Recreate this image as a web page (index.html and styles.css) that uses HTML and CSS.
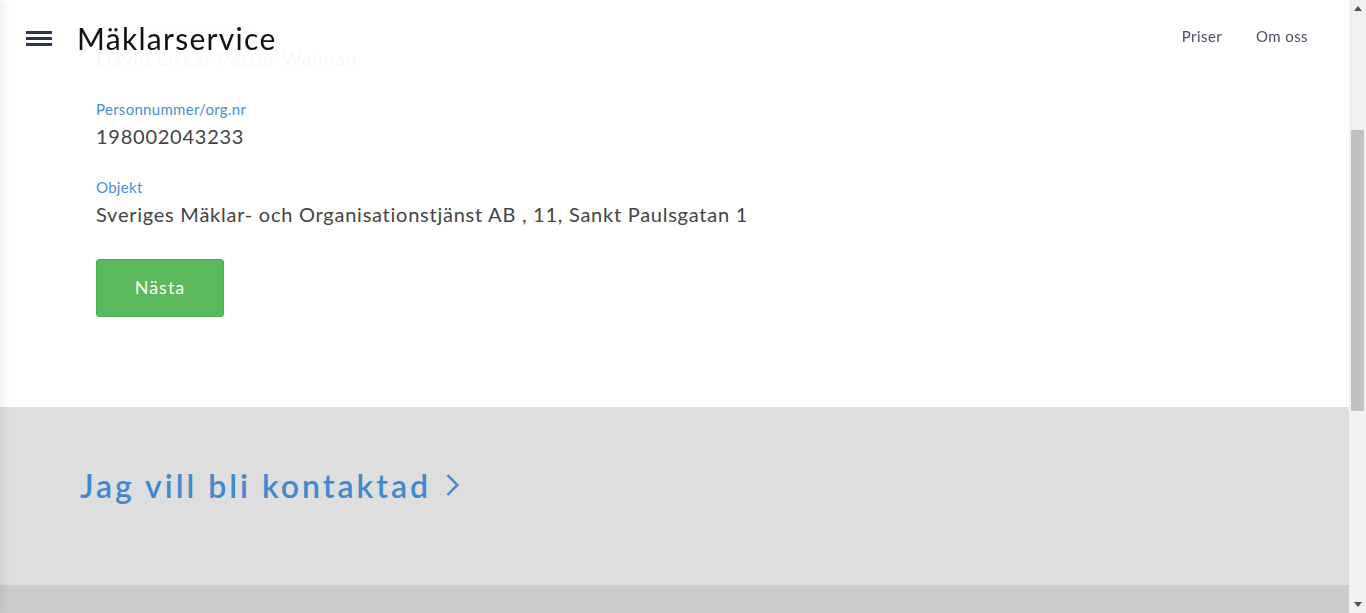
FILE: index.html
```html
<!DOCTYPE html>
<html lang="sv">
<head>
<meta charset="utf-8">
<title>Mäklarservice</title>
<link rel="stylesheet" href="styles.css">
</head>
<body>
<header class="topbar">
  <div class="brand">
    <button class="menu-btn" aria-label="Meny">
      <span></span><span></span><span></span>
    </button>
    <span class="logo">Mäklarservice</span>
  </div>
  <nav class="nav">
    <a href="#">Priser</a>
    <a href="#">Om oss</a>
  </nav>
</header>
<div class="drawer-shadow"></div>

<main class="content">
  <div class="field">
    <div class="label">Köpare/säljare + objekt</div>
    <div class="value">David Oskar Petter Walman</div>
  </div>
  <div class="field">
    <div class="label">Personnummer/org.nr</div>
    <div class="value">198002043233</div>
  </div>
  <div class="field">
    <div class="label">Objekt</div>
    <div class="value">Sveriges Mäklar- och Organisationstjänst AB , 11, Sankt Paulsgatan 1</div>
  </div>
  <button class="btn-next">Nästa</button>
</main>

<section class="contact">
  <a href="#" class="contact-link">Jag vill bli kontaktad
    <svg class="chev" width="13" height="22" viewBox="0 0 13 22"><path d="M1.5 1 L11.3 11 L1.5 21" fill="none" stroke="currentColor" stroke-width="2.5"/></svg>
  </a>
</section>

<footer class="footer"></footer>

<div class="scrollbar" aria-hidden="true">
  <div class="sb-btn">
    <svg width="8" height="5" viewBox="0 0 8 5"><polygon points="0,5 8,5 4,0" fill="#505050"/></svg>
  </div>
  <div class="sb-track"><div class="sb-thumb"></div></div>
  <div class="sb-btn">
    <svg width="8" height="5" viewBox="0 0 8 5"><polygon points="0,0 8,0 4,5" fill="#505050"/></svg>
  </div>
</div>
<script src="script.js"></script>
</body>
</html>
```

FILE: styles.css
```css
html, body {
  margin: 0;
  padding: 0;
}
body {
  font-family: Lato, "Liberation Sans", sans-serif;
  color: #444;
  background: #fff;
  padding-right: 17px;
}
.topbar {
  position: fixed;
  top: 0;
  left: 0;
  right: 17px;
  height: 80px;
  background: rgba(255,255,255,0.965);
  display: flex;
  align-items: center;
  justify-content: space-between;
  padding: 0 41px 0 26px;
  box-sizing: border-box;
  z-index: 10;
}
.brand {
  display: flex;
  align-items: center;
  gap: 25px;
  margin-top: -4px;
}
.menu-btn {
  border: 0;
  background: none;
  padding: 0;
  width: 26px;
  display: flex;
  flex-direction: column;
  gap: 3px;
}
.menu-btn span {
  display: block;
  height: 3px;
  background: #2e3352;
}
.logo {
  font-size: 30px;
  color: #111;
  letter-spacing: 1.3px;
}
.nav {
  display: flex;
  gap: 34px;
  margin-top: -8px;
}
.nav a {
  color: #4a4e68;
  text-decoration: none;
  font-size: 15px;
  letter-spacing: 0.4px;
}
.drawer-shadow {
  position: fixed;
  top: 0;
  bottom: 0;
  left: -20px;
  width: 20px;
  box-shadow: 0 0 12px rgba(0,0,0,0.12);
  z-index: 11;
}
.scrollbar {
  position: fixed;
  top: 0;
  right: 0;
  bottom: 0;
  width: 17px;
  background: #f1f1f1;
  display: flex;
  flex-direction: column;
  z-index: 20;
}
.sb-btn {
  height: 17px;
  display: flex;
  align-items: center;
  justify-content: center;
}
.sb-track {
  flex: 1;
  padding: 113px 2px 0;
}
.sb-thumb {
  height: 281px;
  background: #c1c1c1;
}
.content {
  padding: 267px 96px 90px;
  display: flex;
  flex-direction: column;
  align-items: flex-start;
}
.field {
  margin-bottom: 28px;
}
.label {
  color: #4a8ed6;
  font-size: 15px;
  line-height: 20px;
  margin-bottom: 4px;
  letter-spacing: 0.3px;
}
.value {
  font-size: 20px;
  line-height: 26px;
  color: #444;
  letter-spacing: 0.75px;
}
.btn-next {
  margin-top: 4px;
  width: 128px;
  height: 58px;
  background: #5cb85c;
  border: 1px solid #4cae4c;
  border-radius: 3px;
  color: #fff;
  font-family: inherit;
  font-size: 18px;
  letter-spacing: 1px;
  padding: 0 0 2px;
}
.contact {
  background: #dedede;
  height: 178px;
  box-sizing: border-box;
  display: flex;
  align-items: center;
  padding: 0 0 22px 80px;
}
.contact-link {
  color: #3f89d0;
  text-decoration: none;
  font-size: 32px;
  font-weight: 600;
  letter-spacing: 3px;
  display: flex;
  align-items: center;
  gap: 15px;
}
.footer {
  background: #ccc;
  height: 432px;
}
```

FILE: script.js
```js
function go() { window.scrollTo(0, 246); }
go();
window.addEventListener('load', go);
```
